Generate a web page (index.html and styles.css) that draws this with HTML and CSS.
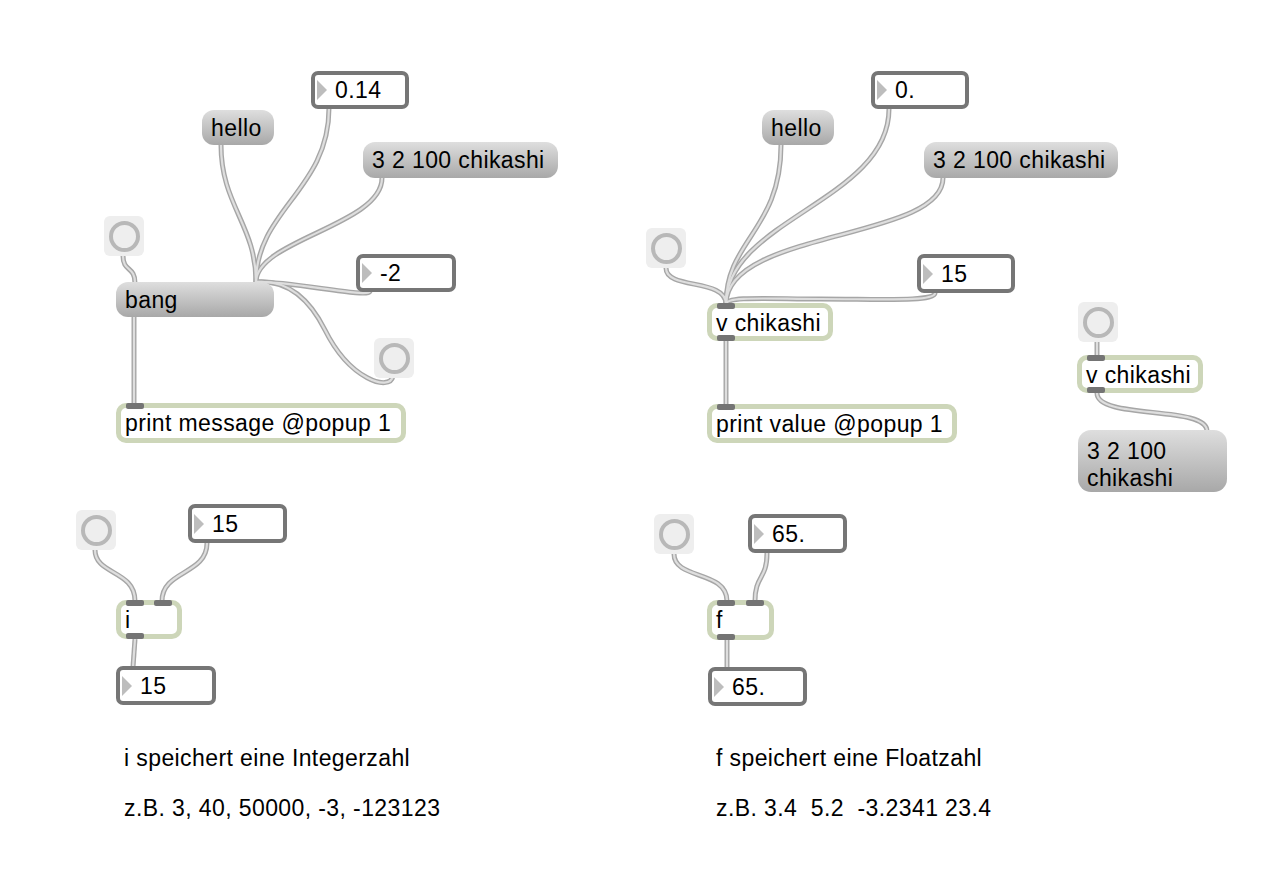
FILE: index.html
```html
<!DOCTYPE html>
<html>
<head>
<meta charset="utf-8">
<title>Max patch</title>
<link rel="stylesheet" href="styles.css">
</head>
<body>
<div class="canvas">
  <svg class="cords" width="1278" height="872" viewBox="0 0 1278 872">
    <defs>
      <path id="c1" d="M221,145 C221,205 256,225 256,282"/>
      <path id="c2" d="M329,108 C329,190 256,210 256,282"/>
      <path id="c3" d="M382,178 C382,225 256,240 256,282"/>
      <path id="c4" d="M370,291 C370,299 292,281 256,282"/>
      <path id="c5" d="M393,376 C390,392 350,380 325,330 C305,290 280,280 256,282"/>
      <path id="c6" d="M123,256 C123,272 135,266 135,283"/>
      <path id="c7" d="M134,317 L134,404"/>
      <path id="c8" d="M781,145 C781,230 726,240 726,304"/>
      <path id="c9" d="M889,109 C889,200 726,220 726,304"/>
      <path id="c10" d="M943,178 C943,240 726,230 726,304"/>
      <path id="c11" d="M666,268 C666,290 726,278 726,304"/>
      <path id="c12" d="M935,293 C935,302 880,299 820,299 C770,299 726,296 726,304"/>
      <path id="c13" d="M726,341 L726,405"/>
      <path id="c14" d="M1097,340 L1097,356"/>
      <path id="c15" d="M1097,393 C1097,420 1207,405 1207,431"/>
      <path id="c16" d="M95,550 C95,575 135,570 135,601"/>
      <path id="c17" d="M207,543 C207,575 162,570 162,601"/>
      <path id="c18" d="M135,639 L133,667"/>
      <path id="c19" d="M674,554 C674,580 727,570 727,601"/>
      <path id="c20" d="M767,553 C767,580 755,575 755,601"/>
      <path id="c21" d="M727,640 L727,668"/>
    </defs>
    <g class="cord-outer">
      <use href="#c1"/><use href="#c2"/><use href="#c3"/><use href="#c4"/><use href="#c5"/><use href="#c6"/><use href="#c7"/>
      <use href="#c8"/><use href="#c9"/><use href="#c10"/><use href="#c11"/><use href="#c12"/><use href="#c13"/><use href="#c14"/>
      <use href="#c15"/><use href="#c16"/><use href="#c17"/><use href="#c18"/><use href="#c19"/><use href="#c20"/><use href="#c21"/>
    </g>
    <g class="cord-inner">
      <use href="#c1"/><use href="#c2"/><use href="#c3"/><use href="#c4"/><use href="#c5"/><use href="#c6"/><use href="#c7"/>
      <use href="#c8"/><use href="#c9"/><use href="#c10"/><use href="#c11"/><use href="#c12"/><use href="#c13"/><use href="#c14"/>
      <use href="#c15"/><use href="#c16"/><use href="#c17"/><use href="#c18"/><use href="#c19"/><use href="#c20"/><use href="#c21"/>
    </g>
  </svg>

  <!-- left patch -->
  <div class="node num n-num1"><span class="tri"></span><span>0.14</span></div>
  <div class="node msg n-hello1">hello</div>
  <div class="node msg n-chik1">3 2 100 chikashi</div>
  <div class="node btn n-btn1"><span class="ring"></span></div>
  <div class="node msg n-bang">bang</div>
  <div class="node num n-num2"><span class="tri"></span><span>-2</span></div>
  <div class="node btn n-btn2"><span class="ring"></span></div>
  <div class="node obj n-print1"><span class="port inlet"></span>print message @popup 1</div>

  <!-- right patch -->
  <div class="node num n-num3"><span class="tri"></span><span>0.</span></div>
  <div class="node msg n-hello2">hello</div>
  <div class="node msg n-chik2">3 2 100 chikashi</div>
  <div class="node btn n-btn3"><span class="ring"></span></div>
  <div class="node num n-num4"><span class="tri"></span><span>15</span></div>
  <div class="node obj n-vch1"><span class="port inlet"></span>v chikashi<span class="port outlet"></span></div>
  <div class="node obj n-print2"><span class="port inlet"></span>print value @popup 1</div>

  <div class="node btn n-btn4"><span class="ring"></span></div>
  <div class="node obj n-vch2"><span class="port inlet"></span>v chikashi<span class="port outlet"></span></div>
  <div class="node msg multi n-chik3">3 2 100<br>chikashi</div>

  <!-- bottom left -->
  <div class="node btn n-btn5"><span class="ring"></span></div>
  <div class="node num n-num5"><span class="tri"></span><span>15</span></div>
  <div class="node obj n-i"><span class="port inlet"></span><span class="port inlet r"></span>i<span class="port outlet"></span></div>
  <div class="node num n-num6"><span class="tri"></span><span>15</span></div>

  <!-- bottom right -->
  <div class="node btn n-btn6"><span class="ring"></span></div>
  <div class="node num n-num7"><span class="tri"></span><span>65.</span></div>
  <div class="node obj n-f"><span class="port inlet"></span><span class="port inlet r"></span>f<span class="port outlet"></span></div>
  <div class="node num n-num8"><span class="tri"></span><span>65.</span></div>

  <!-- comments -->
  <div class="cmt n-cmt1">i speichert eine Integerzahl</div>
  <div class="cmt n-cmt2">z.B. 3, 40, 50000, -3, -123123</div>
  <div class="cmt n-cmt3">f speichert eine Floatzahl</div>
  <div class="cmt n-cmt4">z.B. 3.4  5.2  -3.2341 23.4</div>
</div>
</body>
</html>
```
FILE: styles.css
```css
html, body {
  margin: 0;
  padding: 0;
  background: #ffffff;
}

body {
  font-family: "Liberation Sans", Arial, Helvetica, sans-serif;
}

.canvas {
  position: relative;
  width: 1278px;
  height: 872px;
  overflow: hidden;
  background: #ffffff;
}

.cords {
  position: absolute;
  left: 0;
  top: 0;
}

.cord-outer {
  fill: none;
  stroke: #a6a6a6;
  stroke-width: 5;
  stroke-linecap: butt;
}

.cord-inner {
  fill: none;
  stroke: #dedede;
  stroke-width: 2.2;
  stroke-linecap: butt;
}

.node {
  position: absolute;
  box-sizing: border-box;
  font-size: 23px;
  letter-spacing: 0.4px;
  line-height: 26px;
  color: #000;
  white-space: nowrap;
}

/* message boxes */
.msg {
  border-radius: 12px;
  background: linear-gradient(#dedede, #a8a8a8);
  padding: 0 9px;
  display: flex;
  align-items: center;
}

.msg.multi {
  display: block;
  padding: 8px 9px 0;
  line-height: 27px;
  border-radius: 13px;
}

/* number boxes */
.num {
  border: 4px solid #767676;
  border-radius: 7px;
  background: #fff;
  display: flex;
  align-items: center;
  padding-left: 2px;
}

.num .tri {
  width: 0;
  height: 0;
  border-top: 10px solid transparent;
  border-bottom: 10px solid transparent;
  border-left: 10px solid #bdbdbd;
  margin-right: 8px;
  flex: none;
}

/* object boxes */
.obj {
  border: 5px solid #cdd6b9;
  border-radius: 10px;
  background: #fff;
  padding: 2px 0 0 4px;
}

.port {
  position: absolute;
  width: 18px;
  height: 6px;
  background: #747474;
  border-radius: 2px;
}

.inlet {
  top: -5px;
  left: 5px;
}

.inlet.r {
  left: auto;
  right: 5px;
}

.outlet {
  bottom: -5px;
  left: 5px;
}

/* buttons */
.btn {
  width: 40px;
  height: 40px;
  background: #eeeeee;
  border-radius: 6px;
  display: flex;
  align-items: center;
  justify-content: center;
}

.btn .ring {
  width: 31px;
  height: 31px;
  box-sizing: border-box;
  border: 4.5px solid #b8b8b8;
  border-radius: 50%;
}

/* comments */
.cmt {
  position: absolute;
  font-size: 23px;
  letter-spacing: 0.4px;
  line-height: 26px;
  white-space: pre;
  color: #000;
}

/* node placement on the patcher canvas */
.n-num1   { left: 311px;  top: 71px;  width: 98px;  height: 38px; }
.n-hello1 { left: 202px;  top: 110px; width: 72px;  height: 35px; }
.n-chik1  { left: 363px;  top: 142px; width: 195px; height: 36px; }
.n-btn1   { left: 104px;  top: 216px; }
.n-bang   { left: 116px;  top: 282px; width: 158px; height: 35px; }
.n-num2   { left: 356px;  top: 254px; width: 100px; height: 38px; }
.n-btn2   { left: 374px;  top: 338px; }
.n-print1 { left: 116px;  top: 403px; width: 290px; height: 40px; }

.n-num3   { left: 871px;  top: 71px;  width: 98px;  height: 38px; }
.n-hello2 { left: 762px;  top: 110px; width: 72px;  height: 35px; }
.n-chik2  { left: 924px;  top: 142px; width: 194px; height: 36px; }
.n-btn3   { left: 646px;  top: 228px; }
.n-num4   { left: 917px;  top: 254px; width: 98px;  height: 39px; }
.n-vch1   { left: 707px;  top: 303px; width: 126px; height: 38px; }
.n-print2 { left: 707px;  top: 404px; width: 250px; height: 39px; }

.n-btn4   { left: 1078px; top: 302px; }
.n-vch2   { left: 1077px; top: 355px; width: 126px; height: 38px; }
.n-chik3  { left: 1078px; top: 430px; width: 149px; height: 62px; }

.n-btn5   { left: 76px;   top: 510px; }
.n-num5   { left: 188px;  top: 504px; width: 99px;  height: 39px; }
.n-i      { left: 116px;  top: 600px; width: 66px;  height: 39px; }
.n-num6   { left: 116px;  top: 666px; width: 100px; height: 39px; }

.n-btn6   { left: 654px;  top: 514px; }
.n-num7   { left: 748px;  top: 514px; width: 99px;  height: 39px; }
.n-f      { left: 707px;  top: 600px; width: 67px;  height: 40px; }
.n-num8   { left: 708px;  top: 667px; width: 99px;  height: 39px; }

.n-cmt1 { left: 124px; top: 745px; }
.n-cmt2 { left: 124px; top: 795px; }
.n-cmt3 { left: 716px; top: 745px; }
.n-cmt4 { left: 716px; top: 795px; }
```
